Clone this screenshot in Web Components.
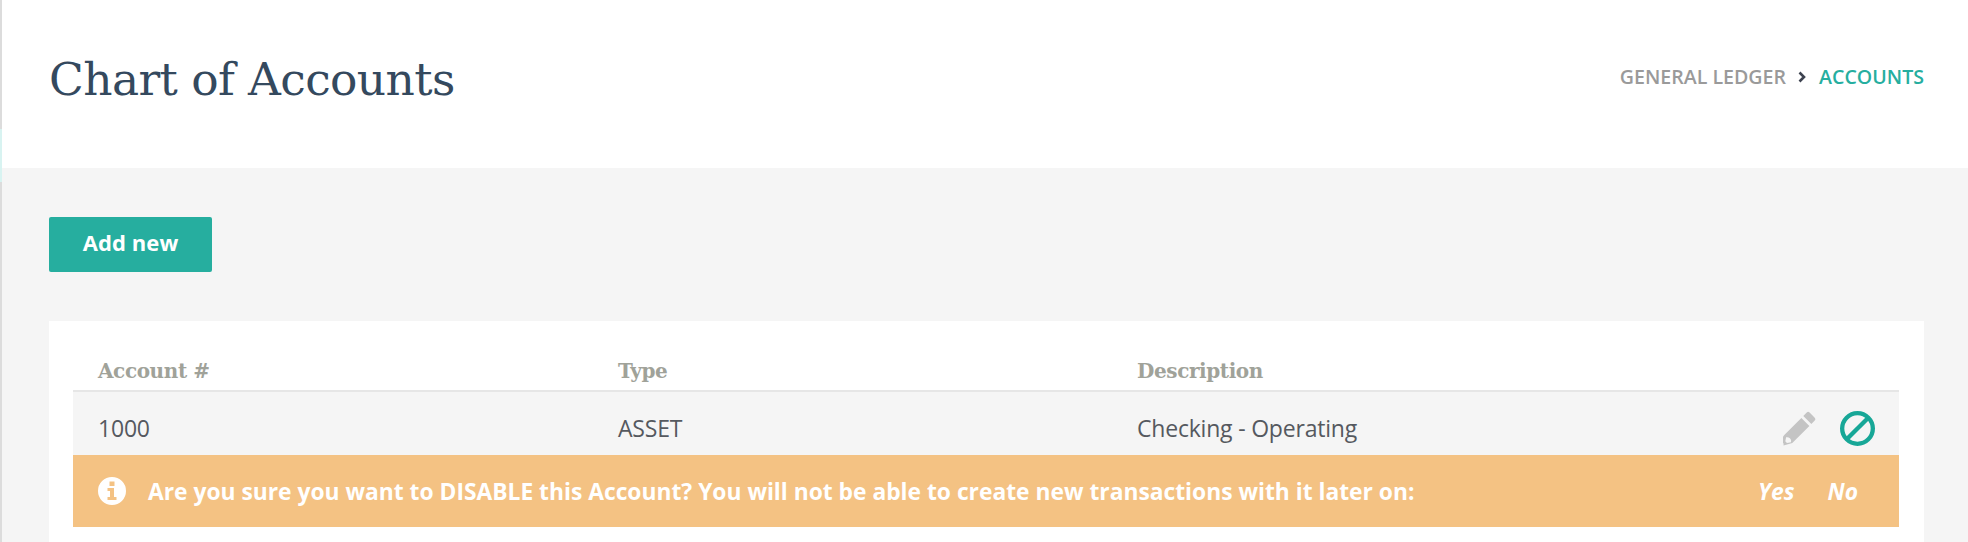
<!DOCTYPE html>
<html lang="en">
<head>
    <meta charset="UTF-8">
    <title>Chart of Accounts</title>
    <style>
        html, body { margin: 0; height: 100%; overflow: hidden; }
        body { background: #f5f5f5; font-family: "Open Sans", sans-serif; }
    </style>
</head>
<body>
    <template id="page-header-tmpl">
        <style>
            :host {
                display: flex;
                justify-content: space-between;
                align-items: center;
                box-sizing: border-box;
                height: 168px;
                padding: 0 44px 0 47px;
                background: #fff;
                border-left: 2px solid;
                border-image: linear-gradient(#dcdcdc 128px, #d8f3f1 128px) 1;
            }
            h1 {
                margin: 0 0 9px;
                font: 400 45.500px "DejaVu Serif", serif;
                letter-spacing: -0.6px;
                color: #34495e;
            }
        </style>
        <h1><slot name="title"></slot></h1>
        <slot name="crumbs"></slot>
    </template>

    <template id="bread-crumbs-tmpl">
        <style>
            :host {
                display: flex;
                align-items: center;
                margin-bottom: 15px;
                font: 600 19.600px "Open Sans", sans-serif;
                color: #9a9a9a;
            }
            svg { margin: 0 12px 0 11px; }
            ::slotted(.current) { color: #26ae9f; }
        </style>
        <slot name="parent"></slot>
        <svg width="10" height="14" viewBox="0 0 10 14"><path d="M2.500 2.500l4.500 4.500-4.500 4.500" fill="none" stroke="#3d4350" stroke-width="2.600"/></svg>
        <slot name="current"></slot>
    </template>

    <template id="add-button-tmpl">
        <style>
            :host {
                display: inline-flex;
                align-items: center;
                justify-content: center;
                box-sizing: border-box;
                width: 163px;
                height: 55px;
                padding-bottom: 5px;
                background: #26ae9f;
                border-radius: 2px;
                font: 700 22px "Open Sans", sans-serif;
                letter-spacing: 0.1px;
                color: #fff;
            }
        </style>
        <slot></slot>
    </template>

    <template id="account-table-tmpl">
        <style>
            :host {
                display: block;
                box-sizing: border-box;
                height: 221px;
                margin-top: 49px;
                padding: 0 25px 0 24px;
                background: #fff;
            }
            .head {
                display: grid;
                grid-template-columns: 520px 519px 1fr;
                align-items: end;
                box-sizing: border-box;
                height: 71px;
                padding: 0 0 7px 25px;
                border-bottom: 2px solid #e6e6e6;
                font: 700 20px "DejaVu Serif", serif;
                letter-spacing: -0.4px;
                color: #a0a299;
            }
        </style>
        <div class="head"><slot name="heads"></slot></div>
        <slot></slot>
    </template>

    <template id="account-row-tmpl">
        <style>
            :host {
                display: grid;
                grid-template-columns: 520px 519px 1fr auto;
                align-items: center;
                box-sizing: border-box;
                height: 63px;
                padding: 9px 24px 0 25px;
                background: #f5f5f5;
                font: 400 23px "Open Sans", sans-serif;
                letter-spacing: -0.2px;
                color: #55595f;
            }
            .icons { display: flex; align-items: center; gap: 23px; }
            svg { display: block; }
        </style>
        <slot></slot>
        <div class="icons">
            <svg width="35" height="35" viewBox="0 0 34 34">
                <path d="M24 1.500a2 2 0 0 1 2.800 0l5 5a2 2 0 0 1 0 2.800l-3.300 3.300-7.800-7.800zM18.800 6.800l7.800 7.800L10 31.200 1.500 33.500v-2L1 31V25l1-1.500zM4 25.500l-.8 4 1.600 1.600 4-.8a4 4 0 0 0-4.800-4.800z" fill="#c4c4c4" fill-rule="evenodd"/>
            </svg>
            <svg width="35" height="35" viewBox="0 0 34 34">
                <circle cx="17" cy="17" r="14.900" fill="none" stroke="#17a797" stroke-width="4.200"/>
                <path d="M7 27L27 7" stroke="#17a797" stroke-width="4.200"/>
            </svg>
        </div>
    </template>

    <template id="confirm-bar-tmpl">
        <style>
            :host {
                display: flex;
                align-items: center;
                box-sizing: border-box;
                height: 72px;
                padding: 0 41px 0 25px;
                background: #f4c283;
                font: 700 22.800px "Open Sans", sans-serif;
                color: #fff;
            }
            svg { flex: none; margin-right: 22px; }
            .msg { flex: 1; }
            .actions { display: flex; gap: 33px; font-style: italic; }
        </style>
        <svg width="28" height="28" viewBox="0 0 28 28">
            <path fill-rule="evenodd" fill="#fff" d="M14 0a14 14 0 1 1 0 28a14 14 0 0 1 0-28zM11.500 4.500v4.500h5V4.500zM9.500 11v3h2.500v6H9.500v3h9v-3H16v-9z"/>
        </svg>
        <div class="msg"><slot></slot></div>
        <div class="actions"><slot name="actions"></slot></div>
    </template>

    <template id="page-body-tmpl">
        <style>
            :host {
                display: block;
                box-sizing: border-box;
                height: 374px;
                padding: 49px 44px 0 47px;
                border-left: 2px solid;
                border-image: linear-gradient(#d8f3f1 15px, #dcdcdc 15px) 1;
            }
        </style>
        <slot></slot>
    </template>

    <script>
        // every element is the same: clone its template into an open shadow root
        for (const name of ['page-header', 'bread-crumbs', 'add-button', 'account-table', 'account-row', 'confirm-bar', 'page-body']) {
            customElements.define(name, class extends HTMLElement {
                constructor() {
                    super();
                    const tmpl = document.getElementById(name + '-tmpl');
                    this.attachShadow({ mode: 'open' }).append(tmpl.content.cloneNode(true));
                }
            });
        }
    </script>

    <page-header>
        <span slot="title">Chart of Accounts</span>
        <bread-crumbs slot="crumbs">
            <span slot="parent">GENERAL LEDGER</span>
            <span slot="current" class="current">ACCOUNTS</span>
        </bread-crumbs>
    </page-header>
    <page-body>
        <add-button>Add new</add-button>
        <account-table>
            <span slot="heads">Account #</span>
            <span slot="heads">Type</span>
            <span slot="heads">Description</span>
            <account-row>
                <span>1000</span>
                <span>ASSET</span>
                <span>Checking - Operating</span>
            </account-row>
            <confirm-bar>
                Are you sure you want to DISABLE this Account? You will not be able to create new transactions with it later on:
                <span slot="actions">Yes</span>
                <span slot="actions">No</span>
            </confirm-bar>
        </account-table>
    </page-body>
</body>
</html>
